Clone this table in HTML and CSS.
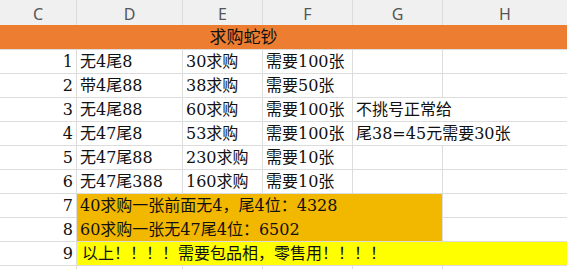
FILE: index.html
```html
<!DOCTYPE html>
<html lang="zh-CN">
<head>
<meta charset="utf-8">
<title>求购蛇钞</title>
<link rel="stylesheet" href="styles.css">
</head>
<body>
<div class="sheet">
  <div class="hd">C</div><div class="hd">D</div><div class="hd">E</div><div class="hd">F</div><div class="hd">G</div><div class="hd">H</div>

  <div class="title">求购蛇钞</div>

  <div class="num">1</div><div class="c">无4尾8</div><div class="c">30求购</div><div class="c">需要100张</div><div class="c"></div><div class="c"></div>
  <div class="num">2</div><div class="c">带4尾88</div><div class="c">38求购</div><div class="c">需要50张</div><div class="c"></div><div class="c"></div>
  <div class="num">3</div><div class="c">无4尾88</div><div class="c">60求购</div><div class="c">需要100张</div><div class="c span2">不挑号正常给</div>
  <div class="num">4</div><div class="c">无47尾8</div><div class="c">53求购</div><div class="c">需要100张</div><div class="c span2">尾38=45元需要30张</div>
  <div class="num">5</div><div class="c">无47尾88</div><div class="c">230求购</div><div class="c">需要10张</div><div class="c"></div><div class="c"></div>
  <div class="num">6</div><div class="c">无47尾388</div><div class="c">160求购</div><div class="c">需要10张</div><div class="c"></div><div class="c"></div>

  <div class="num">7</div>
  <div class="gold">
    <div class="line">40求购一张前面无4，尾4位：4328</div>
    <div class="line">60求购一张无47尾4位：6502</div>
  </div>
  <div class="c h7"></div>
  <div class="num">8</div>
  <div class="c h8"></div>

  <div class="num">9</div><div class="yellow">以上！！！！需要包品相，零售用！！！！</div>

  <div class="num"></div><div class="c"></div><div class="c"></div><div class="c"></div><div class="c"></div><div class="c"></div>
</div>
</body>
</html>
```

FILE: styles.css
```css
html, body {
  margin: 0;
  padding: 0;
  background: #ffffff;
}

.sheet {
  width: 567px;
  height: 269px;
  overflow: hidden;
  display: grid;
  grid-template-columns: 76px 105px 79px 89px 89px 1fr;
  grid-template-rows: 25px 23px repeat(10, 23px);
  gap: 1px;
  background: #dcdcdc;
  font-family: "DejaVu Serif", "Noto Sans CJK SC", serif;
  font-size: 16px;
  color: #111;
}

.hd {
  background: #f0f0f0;
  color: #555;
  font-family: "Noto Sans", "Liberation Sans", sans-serif;
  font-size: 16px;
  display: flex;
  align-items: center;
  justify-content: center;
  padding-top: 2px;
}

.title {
  grid-column: 1 / -1;
  background: #ed7d31;
  font-size: 17px;
  line-height: 23px;
  text-align: center;
  padding-right: 80px;
  margin-top: -1px;
  padding-top: 1px;
}

.c {
  background: #ffffff;
  line-height: 23px;
  padding-left: 3px;
  white-space: nowrap;
  overflow: visible;
}

.span2 {
  grid-column: span 2;
}

.num {
  background: #ffffff;
  line-height: 23px;
  text-align: right;
  padding-right: 3px;
  grid-column: 1;
}

.gold {
  grid-column: 2 / 6;
  grid-row: span 2;
  background: #f2b800;
  padding-left: 3px;
  white-space: nowrap;
}

.line {
  height: 24px;
  line-height: 24px;
}

.h7, .h8 {
  grid-column: 6;
}

.yellow {
  grid-column: 2 / -1;
  background: #ffff00;
  line-height: 23px;
  padding-left: 5px;
  white-space: nowrap;
}
```
